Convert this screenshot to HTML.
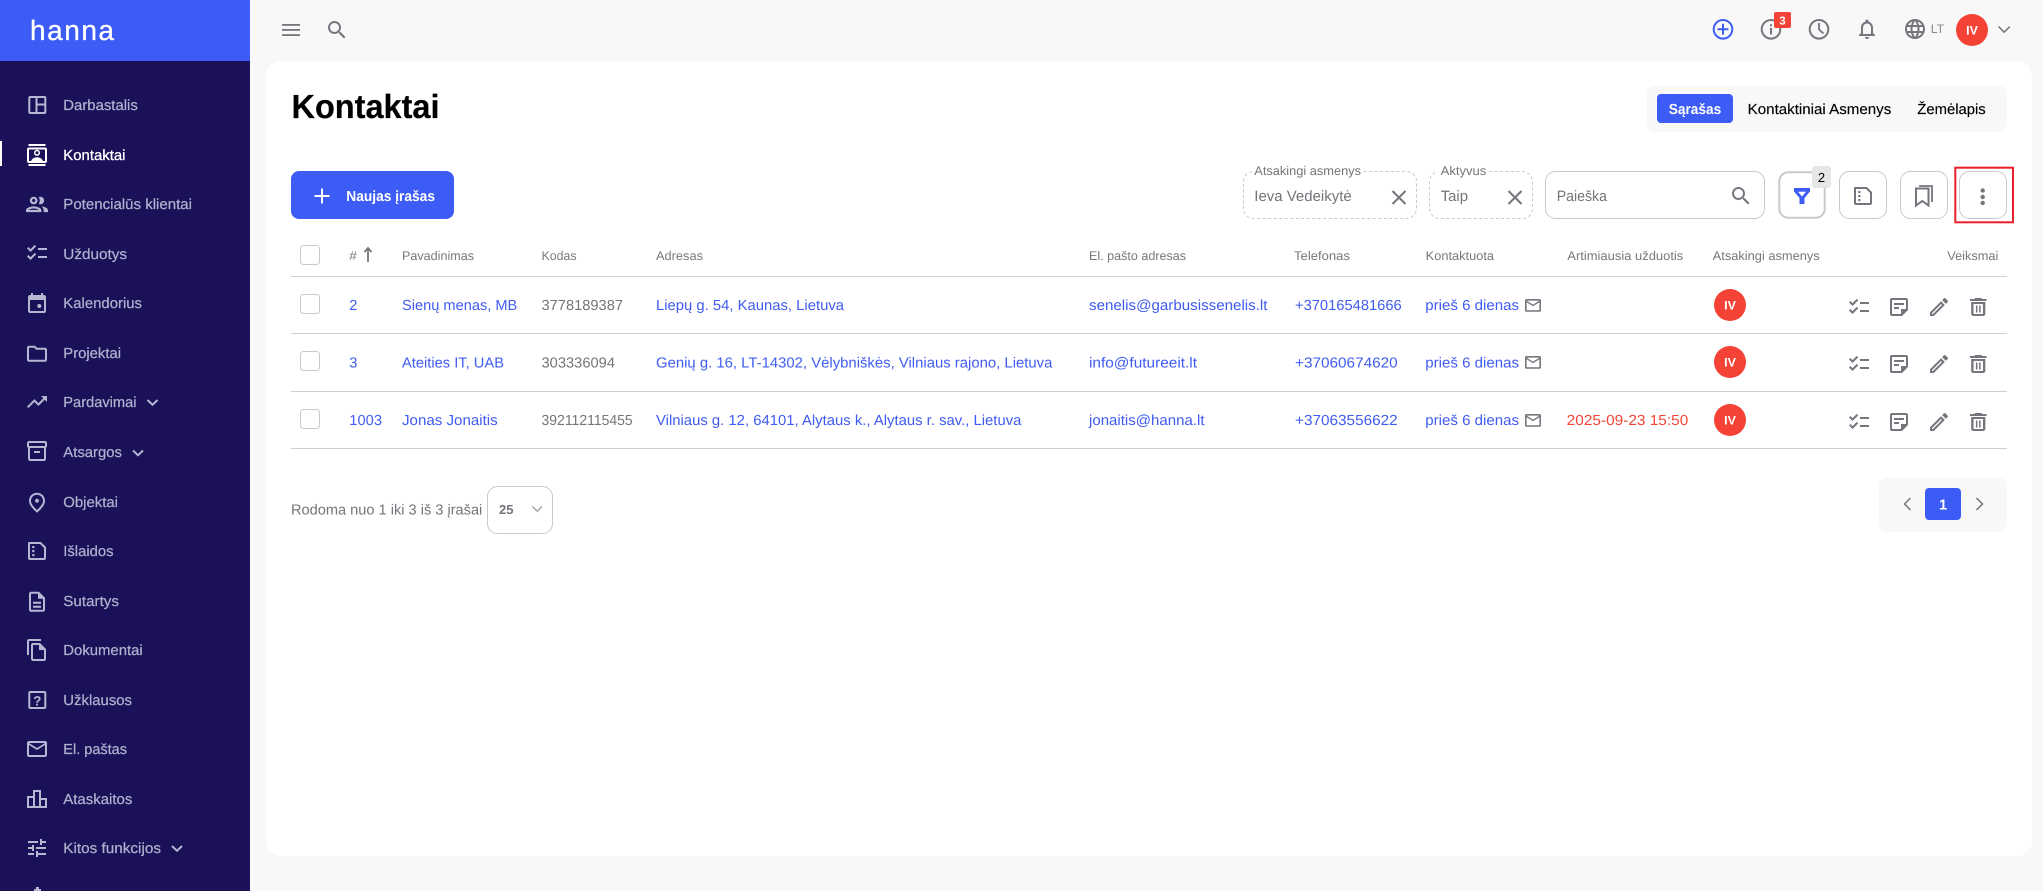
<!DOCTYPE html>
<html lang="lt">
<head>
<meta charset="utf-8">
<title>Kontaktai</title>
<style>
html,body{margin:0;padding:0;width:2043px;height:891px;overflow:hidden;background:#f8f8f8}
svg{display:block}
text{font-family:"Liberation Sans",Arial,sans-serif;text-rendering:geometricPrecision;white-space:pre}
.s{font-size:14.6px;fill:#b0b1ce;stroke:#b0b1ce;stroke-width:.22}
.sa{font-size:14.6px;fill:#fff;stroke:#fff;stroke-width:.3}
.h{font-size:12.6px;fill:#77777d}
.l{font-size:14.6px;fill:#3f5bf2}
.g{font-size:14.6px;fill:#74747a}
.i{fill:#b6b7d3}
.a{fill:#74757d}
.iv{font-size:12.4px;fill:#fff;font-weight:bold}
</style>
</head>
<body>
<svg width="2043" height="891" viewBox="0 0 2043 891" xmlns="http://www.w3.org/2000/svg">
<defs>
<symbol id="chk" viewBox="0 0 24 24" width="24" height="24"><path d="M22 7h-9v2h9V7zm0 8h-9v2h9v-2zM5.54 11 2 7.46l1.41-1.41 2.12 2.12 4.24-4.24 1.41 1.41L5.54 11zm0 8L2 15.46l1.41-1.41 2.12 2.12 4.24-4.24 1.41 1.41L5.54 19z"/></symbol>
<symbol id="note" viewBox="0 0 24 24" width="24" height="24"><path d="M19 5v9h-5v5H5V5h14m0-2H5C3.9 3 3 3.9 3 5v14c0 1.1.9 2 2 2h10l6-6V5c0-1.1-.9-2-2-2zm-7 11H7v-2h5v2zm5-4H7V8h10v2z"/></symbol>
<symbol id="pen" viewBox="0 0 24 24" width="24" height="24"><path d="M3 17.25V21h3.75L17.81 9.94l-3.75-3.75L3 17.25zM5.92 19H5v-.92l9.06-9.06.92.92L5.92 19zM20.71 5.63l-2.34-2.34c-.2-.2-.45-.29-.71-.29s-.51.1-.7.29l-1.83 1.83 3.75 3.75 1.83-1.83c.39-.39.39-1.02 0-1.41z"/></symbol>
<symbol id="env" viewBox="0 0 24 24" width="24" height="24"><path d="M22 6c0-1.1-.9-2-2-2H4c-1.1 0-2 .9-2 2v12c0 1.1.9 2 2 2h16c1.1 0 2-.9 2-2V6zm-2 0-8 5-8-5h16zm0 12H4V8l8 5 8-5v10z"/></symbol>
<symbol id="trash" viewBox="0 0 24 24" width="24" height="24" preserveAspectRatio="none"><path d="M6 19c0 1.1.9 2 2 2h8c1.1 0 2-.9 2-2V7H6v12zM8 9h8v10H8V9zm7.5-5-1-1h-5l-1 1H5v2h14V4h-3.5z"/><path d="M10 10.5h1.3v7H10zM12.7 10.500H14v7h-1.300z"/></symbol>
<symbol id="doc" viewBox="0 0 18 18" width="18" height="18"><path d="M1 1h11.500l4.500 4.500V16a1 1 0 0 1-1 1H2a1 1 0 0 1-1-1z" fill="none" stroke="currentColor" stroke-width="2" stroke-linejoin="round"/><rect x="4.200" y="4" width="2.200" height="2.200" fill="currentColor"/><rect x="4.200" y="8" width="2.200" height="2.200" fill="currentColor"/><rect x="4.200" y="12" width="2.200" height="2.200" fill="currentColor"/></symbol>
</defs>

<!-- page -->
<rect width="2043" height="891" fill="#f8f8f8"/>
<rect x="266" y="61" width="1766" height="795" rx="15" fill="#fff"/>

<!-- sidebar -->
<rect width="250" height="891" fill="#1a1159"/>
<rect width="250" height="61" fill="#3d5cf5"/>
<text x="30" y="40" font-size="28" fill="#fff" stroke="#fff" stroke-width=".3" textLength="84" lengthAdjust="spacing">hanna</text>
<rect x="0" y="141" width="2" height="25" fill="#fff"/>

<text class="s" x="63.3" y="110" textLength="74.5" lengthAdjust="spacingAndGlyphs">Darbastalis</text>
<text class="sa" x="63.3" y="160" textLength="62.2" lengthAdjust="spacingAndGlyphs">Kontaktai</text>
<text class="s" x="63.3" y="209" textLength="128.7" lengthAdjust="spacingAndGlyphs">Potencialūs klientai</text>
<text class="s" x="63.3" y="259" textLength="63.7" lengthAdjust="spacingAndGlyphs">Užduotys</text>
<text class="s" x="63.3" y="308" textLength="78.7" lengthAdjust="spacingAndGlyphs">Kalendorius</text>
<text class="s" x="63.3" y="358" textLength="57.7" lengthAdjust="spacingAndGlyphs">Projektai</text>
<text class="s" x="63.3" y="407" textLength="73.2" lengthAdjust="spacingAndGlyphs">Pardavimai</text>
<text class="s" x="63.3" y="457" textLength="58.7" lengthAdjust="spacingAndGlyphs">Atsargos</text>
<text class="s" x="63.3" y="507" textLength="54.7" lengthAdjust="spacingAndGlyphs">Objektai</text>
<text class="s" x="63.3" y="556" textLength="50.2" lengthAdjust="spacingAndGlyphs">Išlaidos</text>
<text class="s" x="63.3" y="606" textLength="55.7" lengthAdjust="spacingAndGlyphs">Sutartys</text>
<text class="s" x="63.3" y="655" textLength="79.4" lengthAdjust="spacingAndGlyphs">Dokumentai</text>
<text class="s" x="63.3" y="705" textLength="68.7" lengthAdjust="spacingAndGlyphs">Užklausos</text>
<text class="s" x="63.3" y="754" textLength="63.7" lengthAdjust="spacingAndGlyphs">El. paštas</text>
<text class="s" x="63.3" y="804" textLength="69" lengthAdjust="spacingAndGlyphs">Ataskaitos</text>
<text class="s" x="63.3" y="853" textLength="97.7" lengthAdjust="spacingAndGlyphs">Kitos funkcijos</text>

<!-- sidebar icons -->
<g fill="none" stroke="#b6b7d3" stroke-width="2"><rect x="29.3" y="97" width="16" height="16" rx="1"/><path d="M36.5 97v16M36.5 104.5h9"/></g>
<g fill="#fff">
<rect x="28.500" y="144" width="17" height="2"/>
<rect x="28.500" y="164" width="17" height="2"/>
<rect x="28" y="148.500" width="18" height="13.500" rx="1" fill="none" stroke="#fff" stroke-width="2"/>
<circle cx="37" cy="152.800" r="2.300" fill="none" stroke="#fff" stroke-width="1.500"/>
<path d="M31 162c0-3 3-4.800 6-4.800s6 1.800 6 4.800z"/>
</g>
<path class="i" transform="translate(23.8 191.2) scale(1.1)" d="M9 13.75c-2.34 0-7 1.17-7 3.5V19h14v-1.75c0-2.33-4.66-3.5-7-3.5zM4.34 17c.84-.58 2.87-1.25 4.66-1.25s3.82.67 4.66 1.25H4.34zM9 12c1.93 0 3.5-1.57 3.5-3.5S10.93 5 9 5 5.5 6.57 5.5 8.5 7.07 12 9 12zm0-5c.83 0 1.5.67 1.5 1.5S9.83 10 9 10s-1.5-.67-1.5-1.5S8.17 7 9 7zm7.04 6.81c1.16.84 1.96 1.96 1.96 3.44V19h4v-1.75c0-2.02-3.5-3.17-5.96-3.44zM15 12c1.93 0 3.5-1.57 3.5-3.5S16.93 5 15 5c-.54 0-1.04.13-1.5.35.63.89 1 1.98 1 3.15s-.37 2.26-1 3.15c.46.22.96.35 1.5.35z"/>
<use href="#chk" x="25" y="241" class="i"/>
<g class="i" transform="translate(25 292)"><path d="M16 1v2H8V1H6v2H5c-1.11 0-1.99.9-1.99 2L3 19c0 1.1.89 2 2 2h14c1.1 0 2-.9 2-2V5c0-1.1-.9-2-2-2h-1V1h-2zm3 18H5V8h14v11z"/><circle cx="14.3" cy="14" r="2"/></g>
<path class="i" transform="translate(25 341.7)" d="M20 6h-8l-2-2H4c-1.1 0-1.99.9-1.99 2L2 18c0 1.1.9 2 2 2h16c1.1 0 2-.9 2-2V8c0-1.1-.9-2-2-2zm0 12H4V6h5.17l2 2H20v10z"/>
<path class="i" transform="translate(25 390)" d="M16 6l2.29 2.29-4.88 4.88-4-4L2 16.59 3.41 18l6-6 4 4 6.3-6.29L22 12V6z"/>
<path class="i" transform="translate(25 439)" d="M20 2H4c-1 0-2 .9-2 2v3.01c0 .72.43 1.34 1 1.69V20c0 1.1 1.1 2 2 2h14c.9 0 2-.9 2-2V8.7c.57-.35 1-.97 1-1.69V4c0-1.1-1-2-2-2zm-1 18H5V9h14v11zm1-13H4V4h16v3zM9 12h6v2H9z"/>
<path class="i" transform="translate(25 490.7)" d="M12 12c-1.1 0-2-.9-2-2s.9-2 2-2 2 .9 2 2-.9 2-2 2zm6-1.8C18 6.57 15.35 4 12 4s-6 2.57-6 6.2c0 2.34 1.95 5.44 6 9.14 4.05-3.7 6-6.8 6-9.14zM12 2c4.2 0 8 3.22 8 8.2 0 3.32-2.67 7.25-8 11.8-5.33-4.55-8-8.48-8-11.8C4 5.22 7.8 2 12 2z"/>
<use href="#doc" x="28" y="542" style="color:#b6b7d3"/>
<path class="i" transform="translate(25 589.7)" d="M8 16h8v2H8zm0-4h8v2H8zm6-10H6c-1.1 0-2 .9-2 2v16c0 1.1.89 2 1.99 2H18c1.1 0 2-.9 2-2V8l-6-6zm4 18H6V4h7v5h5v11z"/>
<path class="i" transform="translate(25 638)" d="M16 1H4c-1.1 0-2 .9-2 2v14h2V3h12V1zm-1 4H8c-1.1 0-2 .9-2 2v14c0 1.1.9 2 2 2h11c1.1 0 2-.9 2-2V11l-6-6zM8 21V7h6v5h5v9H8z"/>
<rect x="29.3" y="692" width="16" height="16" rx="1" fill="none" stroke="#b6b7d3" stroke-width="2"/>
<text x="37.3" y="705.3" font-size="13.5" font-weight="bold" fill="#b6b7d3" text-anchor="middle">?</text>
<use href="#env" x="25" y="737" class="i"/>
<path class="i" transform="translate(25 787)" d="M16 11V3H8v6H2v12h20V11h-6zm-6-6h4v14h-4V5zm-6 6h4v8H4v-8zm16 8h-4v-6h4v6z"/>
<path class="i" transform="translate(25 836)" d="M3 17v2h6v-2H3zM3 5v2h10V5H3zm10 16v-2h8v-2h-8v-2h-2v6h2zM7 9v2H3v2h4v2h2V9H7zm14 4v-2H11v2h10zm-6-4h2V7h4V5h-4V3h-2v6z"/>
<path d="M34 891v-2h2v-2h3v2h2v2z" fill="#b6b7d3"/>
<g fill="none" stroke="#b6b7d3" stroke-width="2"><path d="M147.5 400l5 4.8 5-4.8M133 450.5l5 4.8 5-4.8M172 846l5 4.8 5-4.8"/></g>

<!-- top bar -->
<g fill="#74757d"><rect x="282" y="24" width="18" height="1.8"/><rect x="282" y="29" width="18" height="1.8"/><rect x="282" y="34.2" width="18" height="1.8"/></g>
<path class="a" transform="translate(325 18)" d="M15.5 14h-.79l-.28-.27C15.41 12.59 16 11.11 16 9.5 16 5.91 13.09 3 9.5 3S3 5.91 3 9.5 5.91 16 9.5 16c1.61 0 3.09-.59 4.23-1.57l.27.28v.79l5 4.99L20.49 19l-4.99-5zm-6 0C7.01 14 5 11.99 5 9.5S7.01 5 9.5 5 14 7.01 14 9.5 11.99 14 9.5 14z"/>

<circle cx="1723" cy="29.3" r="9.3" fill="none" stroke="#3d5cf5" stroke-width="2"/>
<path d="M1723 23.8v11M1717.5 29.3h11" stroke="#3d5cf5" stroke-width="2"/>
<circle cx="1771" cy="29.3" r="9.3" fill="none" stroke="#74757d" stroke-width="2"/>
<path d="M1770 28h2v6.5h-2zM1770 24.2h2v2h-2z" fill="#74757d"/>
<rect x="1774" y="12" width="17" height="16" rx="2" fill="#f44336"/>
<text x="1782.5" y="24.5" font-size="11.5" font-weight="bold" fill="#fff" text-anchor="middle">3</text>
<circle cx="1819" cy="29.3" r="9.3" fill="none" stroke="#74757d" stroke-width="2"/>
<path d="M1819 23v6.5l4.5 4" fill="none" stroke="#74757d" stroke-width="1.8"/>
<path class="a" transform="translate(1855 17)" d="M12 22c1.1 0 2-.9 2-2h-4c0 1.1.9 2 2 2zm6-6v-5c0-3.07-1.63-5.64-4.5-6.32V4c0-.83-.67-1.5-1.5-1.5s-1.5.67-1.5 1.5v.68C7.64 5.36 6 7.92 6 11v5l-2 2v1h16v-1l-2-2zm-2 1H8v-6c0-2.48 1.51-4.5 4-4.5s4 2.02 4 4.5v6z"/>
<path class="a" transform="translate(1903 17)" d="M11.99 2C6.47 2 2 6.48 2 12s4.47 10 9.99 10C17.52 22 22 17.52 22 12S17.52 2 11.99 2zm6.93 6h-2.95c-.32-1.25-.78-2.45-1.38-3.56 1.84.63 3.37 1.91 4.33 3.56zM12 4.04c.83 1.2 1.48 2.53 1.91 3.96h-3.82c.43-1.43 1.08-2.76 1.91-3.96zM4.26 14C4.1 13.36 4 12.69 4 12s.1-1.36.26-2h3.38c-.08.66-.14 1.32-.14 2s.06 1.34.14 2H4.26zm.82 2h2.95c.32 1.25.78 2.45 1.38 3.56-1.84-.63-3.37-1.9-4.33-3.56zm2.95-8H5.08c.96-1.66 2.49-2.93 4.33-3.56C8.81 5.55 8.35 6.75 8.03 8zM12 19.96c-.83-1.2-1.48-2.53-1.91-3.96h3.82c-.43 1.43-1.08 2.76-1.91 3.96zM14.34 14H9.66c-.09-.66-.16-1.32-.16-2s.07-1.35.16-2h4.68c.09.65.16 1.32.16 2s-.07 1.34-.16 2zm.25 5.56c.6-1.11 1.06-2.31 1.38-3.56h2.95c-.96 1.65-2.49 2.93-4.33 3.56zM16.36 14c.08-.66.14-1.32.14-2s-.06-1.34-.14-2h3.38c.16.64.26 1.31.26 2s-.1 1.36-.26 2h-3.38z"/>
<text x="1930.7" y="33" font-size="12.4" fill="#8a8a90" textLength="13.5" lengthAdjust="spacingAndGlyphs">LT</text>
<circle cx="1972" cy="30" r="16" fill="#f44336"/>
<text class="iv" x="1972" y="34.5" text-anchor="middle">IV</text>
<path d="M1998.5 26.5l5.7 5.7 5.7-5.7" fill="none" stroke="#74757d" stroke-width="1.5"/>

<!-- title -->
<text x="291.5" y="118" font-size="33.5" font-weight="bold" fill="#000" stroke="#000" stroke-width=".2" textLength="148" lengthAdjust="spacingAndGlyphs">Kontaktai</text>

<!-- tabs -->
<rect x="1647" y="86" width="360" height="46" rx="8" fill="#f8f8f8"/>
<rect x="1657" y="94" width="76" height="29" rx="4" fill="#3d5cf5"/>
<text x="1668.7" y="114" font-size="14.6" font-weight="bold" fill="#fff" textLength="52.6" lengthAdjust="spacingAndGlyphs">Sąrašas</text>
<text x="1747.7" y="114" font-size="14.6" fill="#000" stroke="#000" stroke-width=".15" textLength="143.6" lengthAdjust="spacingAndGlyphs">Kontaktiniai Asmenys</text>
<text x="1917.3" y="114" font-size="14.6" fill="#000" stroke="#000" stroke-width=".15" textLength="68.4" lengthAdjust="spacingAndGlyphs">Žemėlapis</text>

<!-- new button -->
<rect x="291" y="171" width="163" height="48" rx="8" fill="#3d5cf5"/>
<path d="M322 188.5v15M314.5 196h15" stroke="#fff" stroke-width="2"/>
<text x="346.3" y="201" font-size="14.6" font-weight="bold" fill="#fff" textLength="88.7" lengthAdjust="spacingAndGlyphs">Naujas įrašas</text>

<!-- filters -->
<rect x="1243.5" y="171.5" width="173" height="47" rx="10" fill="#fff" stroke="#c9c9c9" stroke-dasharray="3 2.5"/>
<rect x="1252" y="165" width="111.5" height="12" fill="#fff"/>
<text x="1254.3" y="175" font-size="12.6" fill="#74747a" textLength="106.7" lengthAdjust="spacingAndGlyphs">Atsakingi asmenys</text>
<text x="1254.3" y="201" font-size="15" fill="#74747a" textLength="97.4" lengthAdjust="spacingAndGlyphs">Ieva Vedeikytė</text>
<path d="M1392.5 191l13 13M1405.5 191l-13 13" stroke="#74757d" stroke-width="2"/>
<rect x="1429.5" y="171.5" width="103" height="47" rx="10" fill="#fff" stroke="#c9c9c9" stroke-dasharray="3 2.5"/>
<rect x="1438" y="165" width="50.5" height="12" fill="#fff"/>
<text x="1440.7" y="175" font-size="12.6" fill="#74747a" textLength="45.6" lengthAdjust="spacingAndGlyphs">Aktyvus</text>
<text x="1440.7" y="201" font-size="15" fill="#74747a" textLength="27.3" lengthAdjust="spacingAndGlyphs">Taip</text>
<path d="M1508.5 191l13 13M1521.5 191l-13 13" stroke="#74757d" stroke-width="2"/>
<rect x="1545.5" y="171.5" width="219" height="47" rx="10" fill="#fff" stroke="#c9c9c9"/>
<text x="1556.7" y="201" font-size="15" fill="#74747a" textLength="50.3" lengthAdjust="spacingAndGlyphs">Paieška</text>
<path class="a" transform="translate(1729 184)" d="M15.5 14h-.79l-.28-.27C15.41 12.59 16 11.11 16 9.5 16 5.91 13.09 3 9.5 3S3 5.91 3 9.5 5.91 16 9.5 16c1.61 0 3.09-.59 4.23-1.57l.27.28v.79l5 4.99L20.49 19l-4.99-5zm-6 0C7.01 14 5 11.99 5 9.5S7.01 5 9.5 5 14 7.01 14 9.5 11.99 14 9.5 14z"/>

<!-- toolbar buttons -->
<rect x="1779.3" y="172.3" width="45.4" height="45.4" rx="9" fill="#fff" stroke="#c9c9cd" stroke-width="2"/>
<path d="M1794 188h16v3.500l-5.500 6.500v6h-5v-6l-5.500-6.500z" fill="#3d5cf5"/>
<path d="M1798 191.800h8l-4 4.700z" fill="#fff"/>
<rect x="1812" y="166" width="19" height="22" rx="3" fill="#e6e6e6"/>
<text x="1821.500" y="182" font-size="13" fill="#000" text-anchor="middle">2</text>
<rect x="1839.500" y="171.500" width="47" height="47" rx="10" fill="#fff" stroke="#c9c9c9"/>
<use href="#doc" x="1854" y="187" style="color:#74757d"/>
<rect x="1900.500" y="171.500" width="47" height="47" rx="10" fill="#fff" stroke="#c9c9c9"/>
<path d="M1916 188.500h12.500v17l-6.250-4.500-6.250 4.500z" fill="none" stroke="#74757d" stroke-width="2"/>
<path d="M1919 186h13v16" fill="none" stroke="#74757d" stroke-width="1.800"/>
<rect x="1959.500" y="171.500" width="47" height="47" rx="10" fill="#fff" stroke="#c9c9c9"/>
<circle cx="1982.700" cy="190.500" r="2.200" fill="#74757d"/><circle cx="1982.700" cy="197" r="2.200" fill="#74757d"/><circle cx="1982.700" cy="203" r="2.200" fill="#74757d"/>
<rect x="1955.300" y="167.700" width="57.700" height="54.600" fill="none" stroke="#e8202a" stroke-width="2"/>

<!-- table header -->
<rect x="300.500" y="245.500" width="19" height="19" rx="3" fill="#fff" stroke="#c9c9c9"/>
<text class="h" x="349.300" y="260" textLength="7.700" lengthAdjust="spacingAndGlyphs">#</text>
<path d="M368 262v-13M364.500 252l3.500-4 3.500 4" fill="none" stroke="#74757d" stroke-width="1.800"/>
<text class="h" x="402" y="260" textLength="72" lengthAdjust="spacingAndGlyphs">Pavadinimas</text>
<text class="h" x="541.500" y="260" textLength="35" lengthAdjust="spacingAndGlyphs">Kodas</text>
<text class="h" x="656" y="260" textLength="47" lengthAdjust="spacingAndGlyphs">Adresas</text>
<text class="h" x="1089" y="260" textLength="97" lengthAdjust="spacingAndGlyphs">El. pašto adresas</text>
<text class="h" x="1294" y="260" textLength="56" lengthAdjust="spacingAndGlyphs">Telefonas</text>
<text class="h" x="1425.700" y="260" textLength="68.300" lengthAdjust="spacingAndGlyphs">Kontaktuota</text>
<text class="h" x="1567.300" y="260" textLength="116" lengthAdjust="spacingAndGlyphs">Artimiausia užduotis</text>
<text class="h" x="1712.700" y="260" textLength="107" lengthAdjust="spacingAndGlyphs">Atsakingi asmenys</text>
<text class="h" x="1947.300" y="260" textLength="51" lengthAdjust="spacingAndGlyphs">Veiksmai</text>

<!-- lines -->
<g fill="#cfcfcf"><rect x="291" y="276" width="1716" height="1"/><rect x="291" y="333" width="1716" height="1"/><rect x="291" y="391" width="1716" height="1"/><rect x="291" y="448" width="1716" height="1"/></g>

<!-- row 1 -->
<rect x="300.500" y="294.500" width="19" height="19" rx="3" fill="#fff" stroke="#c9c9c9"/>
<text class="l" x="349.300" y="310">2</text>
<text class="l" x="402" y="310" textLength="115.300" lengthAdjust="spacingAndGlyphs">Sienų menas, MB</text>
<text class="g" x="541.500" y="310" textLength="81.500" lengthAdjust="spacingAndGlyphs">3778189387</text>
<text class="l" x="656" y="310" textLength="188" lengthAdjust="spacingAndGlyphs">Liepų g. 54, Kaunas, Lietuva</text>
<text class="l" x="1089" y="310" textLength="178.500" lengthAdjust="spacingAndGlyphs">senelis@garbusissenelis.lt</text>
<text class="l" x="1295" y="310" textLength="106.700" lengthAdjust="spacingAndGlyphs">+370165481666</text>
<text class="l" x="1425.300" y="310" textLength="93.700" lengthAdjust="spacingAndGlyphs">prieš 6 dienas</text>
<circle cx="1730" cy="305" r="16" fill="#f44336"/><text class="iv" x="1730" y="309.500" text-anchor="middle">IV</text>

<!-- row 2 -->
<rect x="300.500" y="351.500" width="19" height="19" rx="3" fill="#fff" stroke="#c9c9c9"/>
<text class="l" x="349.300" y="367.300">3</text>
<text class="l" x="402" y="367.300" textLength="102" lengthAdjust="spacingAndGlyphs">Ateities IT, UAB</text>
<text class="g" x="541.500" y="367.300" textLength="73.500" lengthAdjust="spacingAndGlyphs">303336094</text>
<text class="l" x="656" y="367.300" textLength="396.400" lengthAdjust="spacingAndGlyphs">Genių g. 16, LT-14302, Vėlybniškės, Vilniaus rajono, Lietuva</text>
<text class="l" x="1089" y="367.300" textLength="108" lengthAdjust="spacingAndGlyphs">info@futureeit.lt</text>
<text class="l" x="1295" y="367.300" textLength="102.700" lengthAdjust="spacingAndGlyphs">+37060674620</text>
<text class="l" x="1425.300" y="367.300" textLength="93.700" lengthAdjust="spacingAndGlyphs">prieš 6 dienas</text>
<circle cx="1730" cy="362" r="16" fill="#f44336"/><text class="iv" x="1730" y="366.500" text-anchor="middle">IV</text>

<!-- row 3 -->
<rect x="300.500" y="409.500" width="19" height="19" rx="3" fill="#fff" stroke="#c9c9c9"/>
<text class="l" x="349.300" y="425" textLength="32.700" lengthAdjust="spacingAndGlyphs">1003</text>
<text class="l" x="402" y="425" textLength="95.700" lengthAdjust="spacingAndGlyphs">Jonas Jonaitis</text>
<text class="g" x="541.500" y="425" textLength="91.200" lengthAdjust="spacingAndGlyphs">392112115455</text>
<text class="l" x="656" y="425" textLength="365.400" lengthAdjust="spacingAndGlyphs">Vilniaus g. 12, 64101, Alytaus k., Alytaus r. sav., Lietuva</text>
<text class="l" x="1089" y="425" textLength="115.500" lengthAdjust="spacingAndGlyphs">jonaitis@hanna.lt</text>
<text class="l" x="1295" y="425" textLength="102.700" lengthAdjust="spacingAndGlyphs">+37063556622</text>
<text class="l" x="1425.300" y="425" textLength="93.700" lengthAdjust="spacingAndGlyphs">prieš 6 dienas</text>
<text x="1566.700" y="425" font-size="14.600" fill="#f44336" textLength="121.600" lengthAdjust="spacingAndGlyphs">2025-09-23 15:50</text>
<circle cx="1730" cy="420" r="16" fill="#f44336"/><text class="iv" x="1730" y="424.500" text-anchor="middle">IV</text>

<!-- row icons -->
<g class="a">
<g>
<use href="#env" x="0" y="0" transform="translate(1523.400 295.800) scale(.8)"/>
<use href="#chk" x="1847" y="295"/>
<use href="#note" x="1887" y="295"/>
<use href="#pen" x="1927" y="295"/>
<use href="#trash" transform="translate(1964.100 295) scale(1.180 1)"/>
</g>
<g transform="translate(0 57)">
<use href="#env" x="0" y="0" transform="translate(1523.400 295.800) scale(.8)"/>
<use href="#chk" x="1847" y="295"/>
<use href="#note" x="1887" y="295"/>
<use href="#pen" x="1927" y="295"/>
<use href="#trash" transform="translate(1964.100 295) scale(1.180 1)"/>
</g>
<g transform="translate(0 115)">
<use href="#env" x="0" y="0" transform="translate(1523.400 295.800) scale(.8)"/>
<use href="#chk" x="1847" y="295"/>
<use href="#note" x="1887" y="295"/>
<use href="#pen" x="1927" y="295"/>
<use href="#trash" transform="translate(1964.100 295) scale(1.180 1)"/>
</g>
</g>

<!-- footer -->
<text class="g" x="291" y="514.300" textLength="191.300" lengthAdjust="spacingAndGlyphs">Rodoma nuo 1 iki 3 iš 3 įrašai</text>
<rect x="487.500" y="486.500" width="65" height="47" rx="10" fill="#fff" stroke="#c9c9c9"/>
<text x="499" y="514" font-size="13" font-weight="bold" fill="#74747a" textLength="14.500" lengthAdjust="spacingAndGlyphs">25</text>
<path d="M532.500 506.500l4.700 4.700 4.700-4.700" fill="none" stroke="#9a9aa6" stroke-width="1.300"/>

<rect x="1879" y="478" width="128" height="54" rx="8" fill="#f8f8f8"/>
<rect x="1925" y="488" width="36" height="32" rx="4" fill="#3d5cf5"/>
<text x="1943" y="509.500" font-size="14.600" font-weight="bold" fill="#fff" text-anchor="middle">1</text>
<path d="M1910.500 498l-6 6 6 6M1976.500 498l6 6-6 6" fill="none" stroke="#74757d" stroke-width="1.500"/>
</svg>
</body>
</html>
